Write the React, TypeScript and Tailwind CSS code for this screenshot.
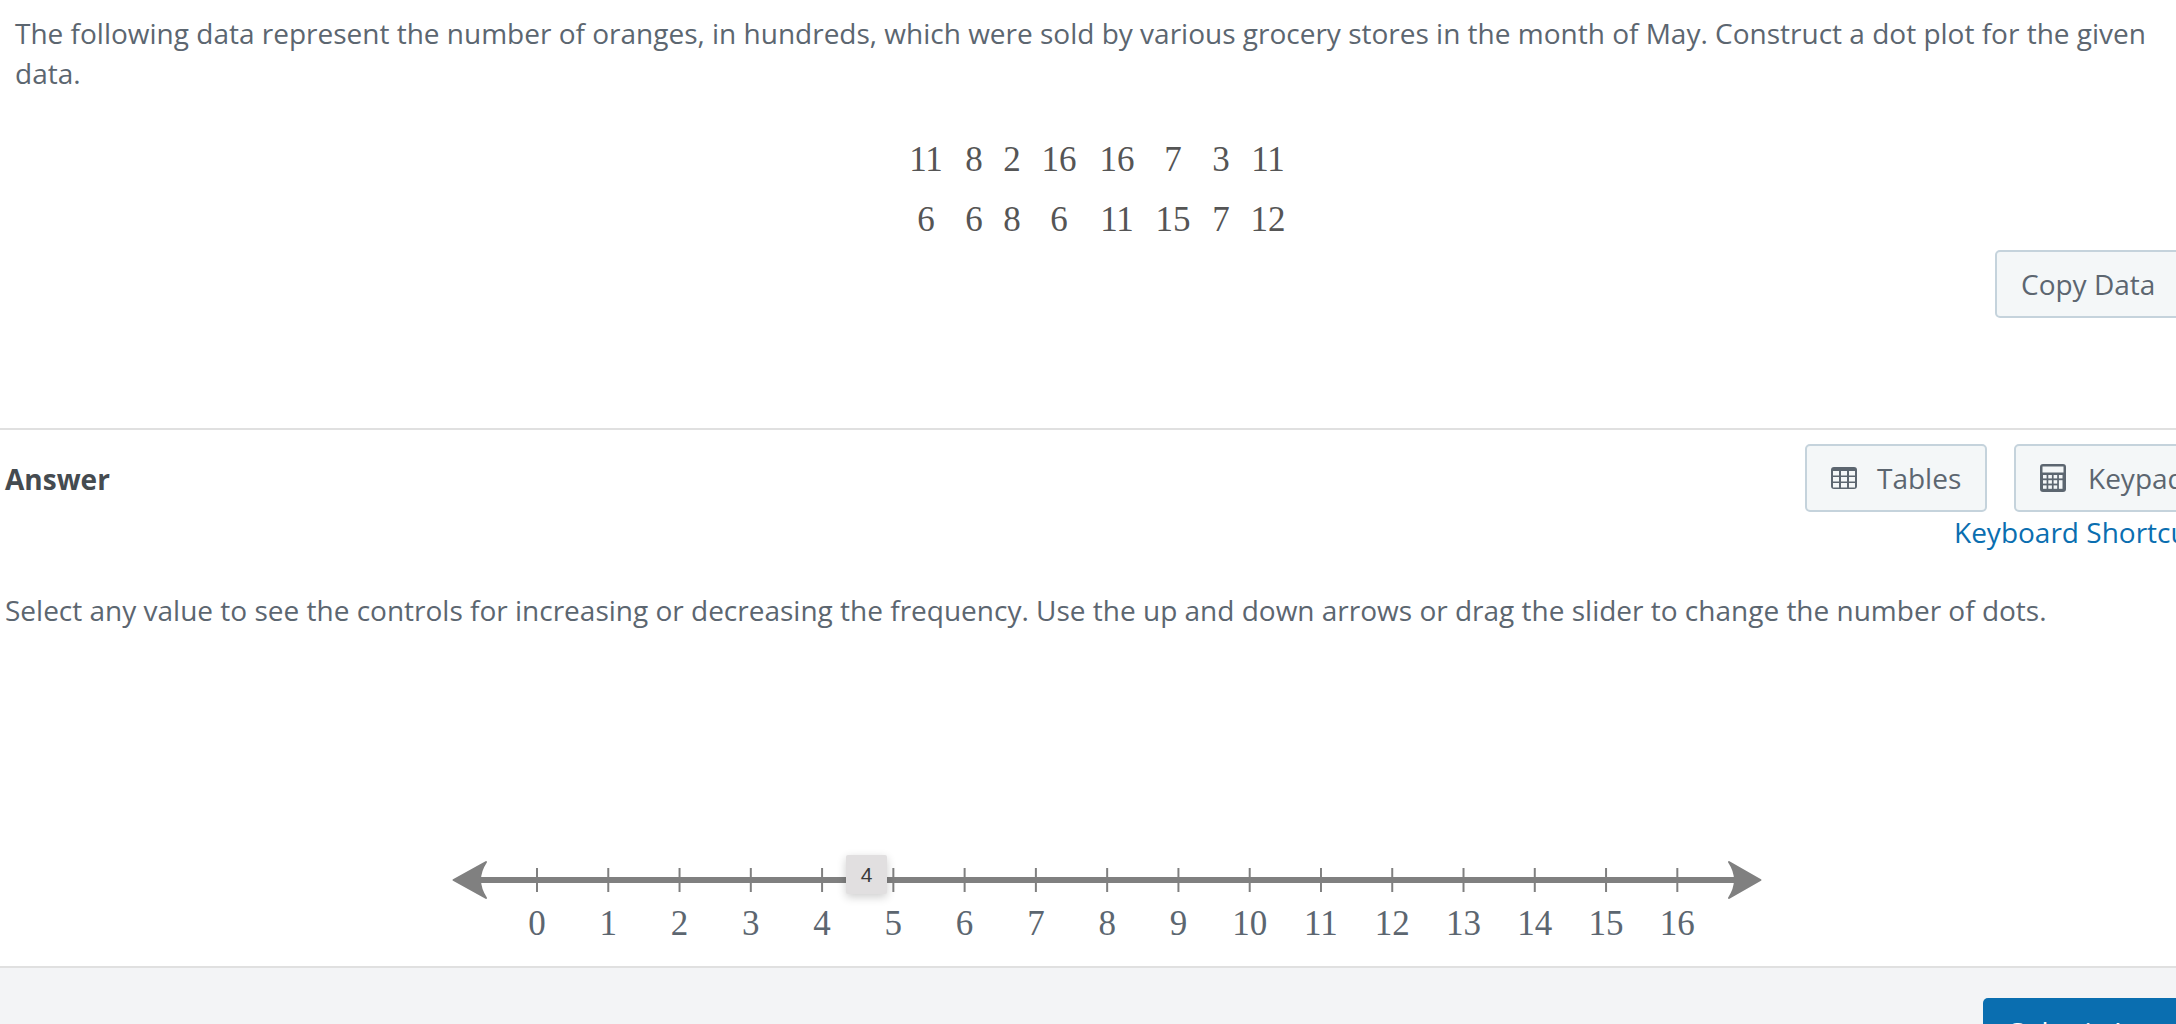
const row1 = ["11", "8", "2", "16", "16", "7", "3", "11"];
const row2 = ["6", "6", "8", "6", "11", "15", "7", "12"];
const colWidths = ["w-[56px]", "w-[40px]", "w-[36px]", "w-[58px]", "w-[58px]", "w-[54px]", "w-[42px]", "w-[52px]"];
const ticks = Array.from({ length: 17 }, (_, i) => i);

function NumberLine() {
  return (
    <svg width="1400" height="100" viewBox="0 0 1400 100" className="block">
      <path d="M3.5 29 L36 11 Q24 29 36 47 Z" fill="#808080" stroke="#808080" strokeWidth="2" strokeLinejoin="round" />
      <rect x="30" y="26" width="1256" height="6" fill="#808080" />
      <path d="M1310.5 29 L1279 11 Q1291 29 1279 47 Z" fill="#808080" stroke="#808080" strokeWidth="2" strokeLinejoin="round" />
      {ticks.map((t) => {
        const x = 87 + t * 71.27;
        return (
          <g key={t}>
            <line x1={x} x2={x} y1="17" y2="41" stroke="#808080" strokeWidth="2" />
            <text x={x} y="84" textAnchor="middle" fontSize="35" fill="#5c6670" fontFamily='"Liberation Serif", serif'>
              {t}
            </text>
          </g>
        );
      })}
    </svg>
  );
}

function TableIcon() {
  const cells = [];
  for (let r = 0; r < 3; r++) {
    for (let c = 0; c < 3; c++) {
      cells.push(<rect key={`${r}-${c}`} x={2 + c * 8} y={4 + r * 6} width="6" height="4.5" fill="#f4f7f8" />);
    }
  }
  return (
    <svg width="26" height="22" viewBox="0 0 26 22">
      <rect width="26" height="22" rx="3" fill="#5c6670" />
      {cells}
    </svg>
  );
}

function KeypadIcon() {
  const keys = [];
  for (let r = 0; r < 3; r++) {
    for (let c = 0; c < 4; c++) {
      // bottom right key spans two rows
      if (c === 3 && r === 2) continue;
      const tall = c === 3 && r === 1;
      keys.push(<rect key={`${r}-${c}`} x={3 + c * 5.3} y={11 + r * 5.2} width="3.6" height={tall ? 8.6 : 3.4} fill="#f4f7f8" />);
    }
  }
  return (
    <svg width="26" height="28" viewBox="0 0 26 28">
      <rect width="26" height="28" rx="3" fill="#5c6670" />
      <rect x="2.5" y="2.5" width="21" height="6" fill="#f4f7f8" />
      {keys}
    </svg>
  );
}

export default function App() {
  return (
    <div className="relative w-[2176px] h-[1024px] overflow-hidden bg-white font-['Open_Sans',sans-serif] text-[#5c6670]">
      {/* Question */}
      <div className="h-[428px] px-[15px] pt-[13px]">
        <p className="w-[2150px] text-[28px] leading-[40px]">
          The following data represent the number of oranges, in hundreds, which were sold by various grocery stores in the month of May. Construct a dot plot for the given data.
        </p>
        <div className="mt-[37px] flex flex-col items-center font-['Liberation_Serif',serif] text-[35px] leading-[60px] text-[#555555]">
          {[row1, row2].map((row, i) => (
            <div key={i} className="flex h-[60px] ml-[16px]">
              {row.map((v, j) => (
                <span key={j} className={`${colWidths[j]} text-center`}>
                  {v}
                </span>
              ))}
            </div>
          ))}
        </div>
        <div className="ml-[1980px]">
          <button className="w-[240px] h-[68px] rounded-[5px] border-2 border-[#c5d3dc] bg-[#f4f7f8] pl-[24px] text-left text-[28px]">
            Copy Data
          </button>
        </div>
      </div>

      {/* Answer */}
      <div className="border-t-2 border-[#e0e0e0] h-[538px] pl-[5px]">
        <div className="flex items-start justify-between h-[120px]">
          <h2 className="mt-[30px] text-[28px] leading-[38px] font-bold text-[#454b50]">Answer</h2>
          <div className="w-[371px] shrink-0 mt-[14px]">
            <div className="flex gap-[27px]">
              <button className="flex items-center w-[182px] h-[68px] shrink-0 rounded-[5px] border-2 border-[#c5d3dc] bg-[#f4f7f8] pl-[24px] text-[28px]">
                <TableIcon />
                <span className="ml-[20px]">Tables</span>
              </button>
              <button className="flex items-center w-[240px] h-[68px] shrink-0 rounded-[5px] border-2 border-[#c5d3dc] bg-[#f4f7f8] pl-[24px] text-[28px]">
                <KeypadIcon />
                <span className="ml-[22px]">Keypad</span>
              </button>
            </div>
            <a className="block mt-[1px] ml-[149px] w-[320px] whitespace-nowrap text-[28px] leading-[38px] text-[#0a6eb0]">
              Keyboard Shortcuts
            </a>
          </div>
        </div>
        <p className="mt-[40px] text-[28px] leading-[40px]">
          Select any value to see the controls for increasing or decreasing the frequency. Use the up and down arrows or drag the slider to change the number of dots.
        </p>
        <div className="relative mt-[221px] ml-[445px] w-[1400px]">
          <NumberLine />
          <div className="absolute left-[396px] top-[4px] flex h-[39px] w-[41px] items-center justify-center rounded-[2px] bg-[#e1dfe0] font-['Liberation_Sans',sans-serif] text-[21px] text-[#3a3a3a] shadow-[0_3px_10px_rgba(0,0,0,0.2)]">
            4
          </div>
        </div>
      </div>

      {/* Footer */}
      <div className="border-t-2 border-[#e0e0e0] bg-[#f3f4f6] h-[60px] pl-[1983px] pt-[30px]">
        <button className="w-[260px] h-[68px] rounded-[5px] bg-[#0a6eb0] pl-[26px] text-left text-[28px] text-white">
          Submit Answer
        </button>
      </div>
    </div>
  );
}
